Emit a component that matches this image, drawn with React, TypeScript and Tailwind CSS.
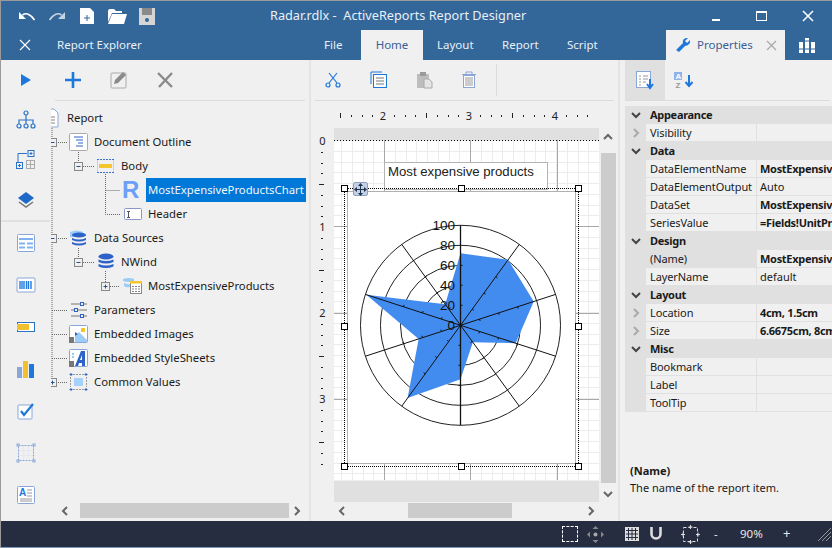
import type { ReactNode } from "react";

const polar = (deg: number, r: number) => {
  const a = (deg * Math.PI) / 180;
  return [460.5 + r * Math.sin(a), 325.3 - r * Math.cos(a)];
};

const values = [72, 81, 77, 58, 21, 54, 90, 44, 99, 26];
const spokes = [0, 36, 72, 108, 144, 180, 216, 252, 288, 324];

function Chevron({ dir, className = "stroke-[#666]" }: { dir: "l" | "r" | "u" | "d"; className?: string }) {
  const pts = { l: "7,1 3,5 7,9", r: "3,1 7,5 3,9", u: "1,7 5,3 9,7", d: "1,3 5,7 9,3" }[dir];
  return (
    <svg width="10" height="10" viewBox="0 0 10 10" className="shrink-0">
      <polyline points={pts} fill="none" strokeWidth="2" className={className} />
    </svg>
  );
}

function Ico({ w = 20, h = 20, children }: { w?: number; h?: number; children: ReactNode }) {
  return (
    <svg width={w} height={h} viewBox={`0 0 ${w} ${h}`} className="shrink-0">
      {children}
    </svg>
  );
}

const blue = "#1e78dc";
const soft = "#8aa6d8";

const treeIcons: Record<string, ReactNode> = {
  report: (
    <Ico w={22} h={20}>
      <path d="M5 1h8l4 4v14H5z" fill="#fff" stroke={soft} />
      <path d="M8 9h6M8 12h6M8 15h6" stroke="#888" />
    </Ico>
  ),
  outline: (
    <Ico w={22} h={20}>
      <rect x="1.5" y="1.5" width="18" height="17" rx="1" fill="#fff" stroke="#aaa" />
      <path d="M6 5h9M8 8h7M10 11h5M8 14h7" stroke="#2d62c8" />
    </Ico>
  ),
  body: (
    <Ico w={22} h={20}>
      <path d="M2 3.5h17M2 16.5h17" stroke="#3c6fd0" strokeDasharray="2 1" />
      <path d="M2.5 4v12M18.5 4v12" stroke="#c5cff0" />
      <rect x="4" y="8" width="13" height="4" fill="#f5c52c" />
    </Ico>
  ),
  chart: (
    <Ico w={22} h={24}>
      <text x="0" y="20" fontFamily="Liberation Sans, sans-serif" fontWeight="700" fontSize="24" fill="#6c9ff5">
        R
      </text>
    </Ico>
  ),
  header: (
    <Ico w={22} h={20}>
      <rect x="2.5" y="4.5" width="17" height="11" rx="1" fill="#fff" stroke="#8a96c8" />
      <path d="M5 7.5h3M6.5 7.5v6M5 13.5h3" stroke="#555" />
    </Ico>
  ),
  sources: (
    <Ico w={22} h={20}>
      <path d="M2 4q7-3 13 0v5H2z" fill="#9ccdf7" />
      <ellipse cx="11" cy="7" rx="7" ry="2.5" fill="#2d62c8" />
      <path d="M4 10q7 3 14 0v2q-7 3-14 0zM4 14q7 3 14 0v2q-7 3-14 0z" fill="#2d62c8" />
    </Ico>
  ),
  db: (
    <Ico w={22} h={20}>
      <ellipse cx="11" cy="4.5" rx="7.5" ry="3" fill="#2d62c8" />
      <path d="M3.5 7.5q7.5 3 15 0v2.5q-7.5 3-15 0zM3.5 12q7.5 3 15 0v2.5q-7.5 3-15 0z" fill="#2d62c8" />
    </Ico>
  ),
  query: (
    <Ico w={22} h={20}>
      <path d="M1 3q6-2 11 0v2q-5 2-11 0zM2 7q5 2 6 1v3q-4 1-6-1z" fill="#9ccdf7" />
      <rect x="8.5" y="5.5" width="11" height="12" fill="#fff" stroke="#888" />
      <rect x="8" y="5" width="12" height="2.5" fill="#f5c52c" />
      <path d="M10 10.5h8M10 13h8M10 15.5h8" stroke="#888" strokeDasharray="2 1" />
    </Ico>
  ),
  params: (
    <Ico w={22} h={20}>
      <path d="M3 4h9M16 4h3M3 10h3M10 10h9M3 16h9M16 16h3" stroke="#777" />
      <rect x="12.5" y="2.5" width="3" height="3" fill="none" stroke="#2d62c8" />
      <rect x="6.5" y="8.5" width="3" height="3" fill="none" stroke="#2d62c8" />
      <rect x="12.5" y="14.5" width="3" height="3" fill="none" stroke="#2d62c8" />
    </Ico>
  ),
  images: (
    <Ico w={22} h={20}>
      <rect x="1.5" y="1.5" width="18" height="17" rx="1" fill="#fff" stroke={soft} />
      <rect x="13" y="4" width="4" height="4" fill="#f5c52c" />
      <path d="M7 12l4-4 8 8v2H7z" fill="#9ccdf7" />
      <path d="M7 8l3 2-3 2z" fill="#2d62c8" />
      <rect x="1" y="13" width="5" height="6" fill="#777" />
    </Ico>
  ),
  styles: (
    <Ico w={22} h={20}>
      <rect x="1.5" y="1.5" width="18" height="17" rx="1" fill="#fff" stroke={soft} />
      <path d="M7 18L13 3h4v15h-3v-3h-3l-1 3zM12 12h2V7z" fill="#2d62c8" />
      <rect x="4" y="5" width="2" height="2" fill="#9ccdf7" />
      <rect x="4" y="8" width="2" height="2" fill="#9ccdf7" />
      <rect x="1" y="13" width="5" height="6" fill="#777" />
    </Ico>
  ),
  common: (
    <Ico w={22} h={20}>
      <rect x="6" y="6" width="9" height="8" fill="#a5d2fb" />
      <path d="M5 2.5h11M5 17.5h11M2.5 5v10M18.5 5v10" stroke="#999" strokeDasharray="2 1" />
      <path d="M3 1v3M1.5 2.5h3M18 1v3M16.5 2.5h3M3 16v3M1.5 17.5h3M18 16v3M16.5 17.5h3" stroke="#2d62c8" />
    </Ico>
  ),
};

const treeRows = [
  { label: "Report", icon: "report", pad: "ml-[-10px]" },
  { label: "Document Outline", icon: "outline", pad: "ml-[17px]" },
  { label: "Body", icon: "body", pad: "ml-[44px]" },
  { label: "MostExpensiveProductsChart", icon: "chart", pad: "ml-[71px]", selected: true },
  { label: "Header", icon: "header", pad: "ml-[71px]" },
  { label: "Data Sources", icon: "sources", pad: "ml-[17px]" },
  { label: "NWind", icon: "db", pad: "ml-[44px]" },
  { label: "MostExpensiveProducts", icon: "query", pad: "ml-[71px]" },
  { label: "Parameters", icon: "params", pad: "ml-[17px]" },
  { label: "Embedded Images", icon: "images", pad: "ml-[17px]" },
  { label: "Embedded StyleSheets", icon: "styles", pad: "ml-[17px]" },
  { label: "Common Values", icon: "common", pad: "ml-[17px]" },
];

const props = [
  { cat: "Appearance" },
  { name: "Visibility", more: true },
  { cat: "Data" },
  { name: "DataElementName", value: "MostExpensiveProductsChart", bold: true },
  { name: "DataElementOutput", value: "Auto" },
  { name: "DataSet", value: "MostExpensiveProducts", bold: true },
  { name: "SeriesValue", value: "=Fields!UnitPrice.Value", bold: true },
  { cat: "Design" },
  { name: "(Name)", value: "MostExpensiveProductsChart", bold: true, active: true },
  { name: "LayerName", value: "default" },
  { cat: "Layout" },
  { name: "Location", value: "4cm, 1.5cm", bold: true, more: true },
  { name: "Size", value: "6.6675cm, 8cm", bold: true, more: true },
  { cat: "Misc" },
  { name: "Bookmark" },
  { name: "Label" },
  { name: "ToolTip" },
];

function TreeLines() {
  const box = (x: number, y: number, minus: boolean) => (
    <g key={`${x}-${y}`}>
      <rect x={x} y={y - 4} width="8" height="8" fill="#f0f0f0" stroke="#888" />
      <path d={minus ? `M${x + 2} ${y}h4` : `M${x + 2} ${y}h4M${x + 4} ${y - 2}v4`} stroke="#2d4f90" />
    </g>
  );
  return (
    <svg className="absolute inset-0" width="260" height="300" viewBox="51 101 260 300">
      <g fill="none" stroke="#666" strokeDasharray="1 1">
        <path d="M52 126V382M56 142.5H67M56 238.5H67M52 310.5H67M52 334.5H67M52 358.5H67M56 382.5H67" />
        <path d="M78.5 152V162M83 166.5H94M78.5 248V258M83 262.5H94" />
        <path d="M105.5 174V214.5H120M105.5 190.5H120M105.5 271V282M110 286.5H120" />
      </g>
      {box(48.5, 142.5, true)}
      {box(74.5, 166.5, true)}
      {box(48.5, 238.5, true)}
      {box(74.5, 262.5, true)}
      {box(101.5, 286.5, false)}
      {box(48.5, 382.5, false)}
    </svg>
  );
}

function TopRuler() {
  const dots = Array.from({ length: 24 }, (_, i) => 340 + i * 10.75);
  return (
    <svg width="309" height="27" viewBox="311 101 309 27" className="shrink-0">
      {dots.map((x, i) =>
        i % 8 === 4 ? (
          <text key={x} x={x} y="120" textAnchor="middle" fontSize="11" fill="#222" fontFamily="Noto Sans, sans-serif">
            {(i + 4) / 8 + 1}
          </text>
        ) : (
          <rect key={x} x={Math.round(x)} y={i % 8 === 0 ? 113 : 115} width="1" height={i % 8 === 0 ? 5 : 2} fill="#222" />
        ),
      )}
    </svg>
  );
}

function SideRuler() {
  const items = Array.from({ length: 32 }, (_, i) => 141 + i * 10.75);
  return (
    <svg width="23" height="340" viewBox="311 128 23 340" className="shrink-0">
      {items.map((y, i) =>
        i % 8 === 0 ? (
          <text key={y} x="322.5" y={y + 4} textAnchor="middle" fontSize="11" fill="#222" fontFamily="Noto Sans, sans-serif">
            {i / 8}
          </text>
        ) : (
          <rect key={y} x={i % 8 === 4 ? 319 : 321} y={Math.round(y)} width={i % 8 === 4 ? 5 : 2} height="1" fill="#222" />
        ),
      )}
    </svg>
  );
}

function GridLines() {
  const xs = Array.from({ length: 26 }, (_, i) => Math.round(341 + i * 10.75) + 0.5);
  const ys = Array.from({ length: 32 }, (_, i) => Math.round(140 + i * 10.75) + 0.5);
  return (
    <svg className="absolute inset-0" width="265" height="340" viewBox="334 140 265 340">
      <g stroke="#ececec" strokeWidth="1">
        {xs.map((x) => (
          <path key={x} d={`M${x} 140V480`} />
        ))}
        {ys.map((y) => (
          <path key={y} d={`M334 ${y}H599`} />
        ))}
      </g>
      <path d="M384.5 140V480M470.5 140V480M557.5 140V480M334 226.5H599M334 313.5H599M334 399.5H599" stroke="#a8a8a8" />
      <path d="M334 140.5H599" stroke="#000" strokeDasharray="1 2" />
    </svg>
  );
}

function Radar() {
  const poly = values.map((v, i) => polar(spokes[i], v).join(",")).join(" ");
  return (
    <svg width="228" height="272" viewBox="347 191 228 272">
      <g fill="none" stroke="#222" strokeWidth="1">
        {[100, 80, 60, 40].map((r) => (
          <circle key={r} cx="460.5" cy="325.3" r={r} />
        ))}
      </g>
      <polygon points={poly} fill="#428bef" />
      {spokes.map((d) => {
        const [x, y] = polar(d, 100);
        const ticks = [20, 40, 60].map((r) => {
          const [a, b] = polar(d, r);
          const [c, e] = polar(d + 90, 2);
          return <path key={r} d={`M${a} ${b}l${c - 460.5} ${e - 325.3}`} stroke="#111" />;
        });
        return (
          <g key={d}>
            <path d={`M460.5 325.3L${x} ${y}`} stroke="#111" strokeWidth={d === 0 || d === 180 ? 1.3 : 1} />
            {ticks}
          </g>
        );
      })}
      {[100, 80, 60, 40, 20, 0].map((v) => (
        <text
          key={v}
          x="455"
          y={325.3 - v + 5}
          textAnchor="end"
          fontSize="13.5"
          fill="#111"
          fontFamily="Liberation Sans, sans-serif"
        >
          {v}
        </text>
      ))}
    </svg>
  );
}

const handleSpots = [
  "left-[7px] top-[45px]",
  "left-[124px] top-[45px]",
  "left-[241px] top-[45px]",
  "left-[7px] top-[183px]",
  "left-[241px] top-[183px]",
  "left-[7px] top-[323px]",
  "left-[124px] top-[323px]",
  "left-[241px] top-[323px]",
];

export default function App() {
  return (
    <div className="w-[832px] h-[548px] overflow-hidden flex flex-col bg-[#f0f0f0] border-l border-t border-[#9a9a9a] font-['Noto_Sans',sans-serif] text-[11.5px] text-[#1a1a1a]">
      {/* title bar */}
      <header className="h-[59px] shrink-0 bg-[#336699] text-[#e8f0f8] flex flex-col">
        <div className="h-[29px] flex items-center relative">
          <div className="ml-[18px] flex items-center">
            <Ico w={16} h={10}>
              <path d="M3.5 4Q9 0 15.5 9" fill="none" stroke="#fff" strokeWidth="1.6" />
              <path d="M0 1v7h7z" fill="#fff" />
            </Ico>
            <div className="ml-[14px]">
              <Ico w={16} h={10}>
                <path d="M12.5 4Q7 0 0.5 9" fill="none" stroke="#c5d2e2" strokeWidth="1.6" />
                <path d="M16 1v7H9z" fill="#c5d2e2" />
              </Ico>
            </div>
            <div className="ml-[14px]">
              <Ico w={16} h={18}>
                <path d="M1 1h10l4 4v12H1z" fill="#fff" />
                <path d="M5 11h6M8 8v6" stroke="#336699" />
              </Ico>
            </div>
            <div className="ml-[12px]">
              <Ico w={20} h={18}>
                <path d="M1 4q0-2 2-2h4l2 2h6v2H5l-4 9z" fill="#fff" />
                <path d="M5 7h15l-3 10H1z" fill="#fff" />
              </Ico>
            </div>
            <div className="ml-[11px]">
              <Ico w={18} h={18}>
                <path d="M1 1h16v17H1z" fill="#d5d5d5" />
                <rect x="4" y="1" width="10" height="7" fill="#8a8a8a" />
                <circle cx="9" cy="13" r="2" fill="#336699" />
              </Ico>
            </div>
          </div>
          <span className="absolute left-[269px] top-[5px] text-[12.7px]">
            Radar.rdlx -&nbsp; ActiveReports Report Designer
          </span>
          <div className="ml-auto flex items-center">
            <div className="h-[2px] w-[8px] bg-white mt-[8px] mr-[36px]" />
            <div className="w-[11px] h-[10px] border border-white border-t-2 mr-[35px]" />
            <div className="mr-[18px]">
              <Ico w={12} h={12}>
                <path d="M1 1L11 11M11 1L1 11" stroke="#fff" strokeWidth="1.5" />
              </Ico>
            </div>
          </div>
        </div>
        <div className="h-[30px] flex items-center">
          <div className="ml-[18px]">
            <Ico w={12} h={12}>
              <path d="M1 1L11 11M11 1L1 11" stroke="#fff" strokeWidth="1.2" />
            </Ico>
          </div>
          <span className="ml-[26px] w-[267px]">Report Explorer</span>
          <span className="w-[37px]">File</span>
          <span className="w-[62px] h-full bg-[#f0f0f0] text-[#3a5f96] flex items-center justify-center">Home</span>
          <span className="w-[79px] pl-[14px]">Layout</span>
          <span className="w-[65px]">Report</span>
          <span className="w-[99px]">Script</span>
          <div className="w-[119px] h-full bg-[#f0f0f0] text-[#3a5f96] flex items-center">
            <div className="ml-[9px] mr-[6px]">
              <Ico w={16} h={16}>
                <path d="M1 13L8 6q-1-4 3-5l2 0-3 3 2 2 3-3q1 5-5 6l-6 6z" fill={blue} />
              </Ico>
            </div>
            <span className="w-[55px]">Properties</span>
            <div className="ml-[14px]">
              <Ico w={11} h={11}>
                <path d="M1 1L10 10M10 1L1 10" stroke="#aaa" strokeWidth="1.3" />
              </Ico>
            </div>
          </div>
          <div className="ml-[13px]">
            <Ico w={18} h={18}>
              <path d="M1 6h4v11H1zM7 2h4v15H7zM13 6h4v11h-4z" fill="#fff" />
              <path d="M1 13h4M7 13h4M13 13h4M7 5h4" stroke="#336699" />
            </Ico>
          </div>
        </div>
      </header>

      <div className="flex-1 flex min-h-0">
        {/* tool rail */}
        <nav className="w-[49px] shrink-0 flex flex-col items-center">
          <div className="h-10 flex items-center justify-center">
            <Ico w={10} h={12}>
              <path d="M0 0L10 6L0 12z" fill={blue} />
            </Ico>
          </div>
          <div className="h-10 flex items-center">
            <Ico>
              <g fill="none" stroke="#2a72c8" strokeWidth="1.2">
                <circle cx="10" cy="3" r="2" />
                <circle cx="3" cy="16" r="2" />
                <circle cx="10" cy="16" r="2" />
                <circle cx="17" cy="16" r="2" />
                <path d="M10 5v9M3 14v-4h14v4" />
              </g>
            </Ico>
          </div>
          <div className="h-10 flex items-center">
            <Ico>
              <path d="M2 12V3.5h9" fill="none" stroke="#2a72c8" />
              <rect x="12" y="0.5" width="6" height="6" fill="none" stroke="#2a72c8" />
              <path d="M13.5 3.5h3M15 2v3" stroke="#2a72c8" />
              <rect x="0.5" y="12.5" width="6" height="6" fill="none" stroke="#2a72c8" />
              <path d="M2 15.5h3M3.5 14v3" stroke="#2a72c8" />
              <rect x="10.5" y="10.5" width="8" height="8" fill="none" stroke="#aaa" />
              <path d="M14.5 10.5v8M10.5 14.5h8" stroke="#aaa" />
            </Ico>
          </div>
          <div className="h-10 flex items-center">
            <Ico>
              <path d="M10 2L18 8L10 14L2 8z" fill="#1d68c8" />
              <path d="M3 12L10 17L17 12" fill="none" stroke="#777" strokeWidth="1.5" />
            </Ico>
          </div>
          <div className="w-full h-[2px] bg-[#e0e0e0]" />
          <div className="h-[42px] flex items-center">
            <Ico>
              <rect x="1.5" y="1.5" width="17" height="17" rx="1" fill="#fff" stroke={soft} />
              <path d="M3 6h14M3 10.5h6M11 10.5h6M3 14.5h6M11 14.5h6" stroke="#7fb2ee" strokeWidth="2" />
            </Ico>
          </div>
          <div className="h-[42px] flex items-center">
            <Ico w={20} h={16}>
              <rect x="1" y="1" width="18" height="14" rx="1" fill="#fff" stroke={soft} />
              <path d="M4 4v8M6 4v8M8 4v8M10.5 4v8M12.5 4v8M15 4v8" stroke={blue} strokeWidth="1.4" />
            </Ico>
          </div>
          <div className="h-[42px] flex items-center">
            <Ico w={18} h={12}>
              <rect x="0.5" y="1.5" width="17" height="9" fill="#fff" stroke="#2a72c8" />
              <rect x="0" y="3" width="12" height="6" fill="#f0c030" />
            </Ico>
          </div>
          <div className="h-[42px] flex items-center">
            <Ico w={18} h={18}>
              <rect x="0" y="7" width="5" height="11" fill="#88a6d6" />
              <rect x="6" y="1" width="5" height="17" fill="#f0c030" />
              <rect x="12" y="4" width="5" height="14" fill={blue} />
            </Ico>
          </div>
          <div className="h-[42px] flex items-center">
            <Ico w={18} h={18}>
              <rect x="1" y="3" width="14" height="14" rx="1" fill="#fff" stroke={soft} />
              <path d="M4 9l3 4 9-11" fill="none" stroke={blue} strokeWidth="2.2" />
            </Ico>
          </div>
          <div className="h-[42px] flex items-center">
            <Ico>
              <rect x="2.5" y="2.5" width="15" height="15" fill="none" stroke={soft} strokeDasharray="2 1" />
              <path d="M7.5 3v14M12.5 3v14M3 7.5h14M3 12.5h14" stroke="#e6e9f2" />
              <rect x="1" y="1" width="2" height="2" fill="#fff" stroke={soft} />
              <rect x="17" y="1" width="2" height="2" fill="#fff" stroke={soft} />
              <rect x="1" y="17" width="2" height="2" fill="#fff" stroke={soft} />
              <rect x="17" y="17" width="2" height="2" fill="#fff" stroke={soft} />
            </Ico>
          </div>
          <div className="h-[42px] flex items-center">
            <Ico>
              <rect x="1.5" y="1.5" width="17" height="17" rx="1" fill="#fff" stroke={soft} />
              <text x="3" y="11" fontSize="10" fontWeight="700" fill={blue} fontFamily="Liberation Sans, sans-serif">
                A
              </text>
              <path d="M11 5h5M11 8h5M11 11h5M4 14h12M4 16h12" stroke="#999" />
            </Ico>
          </div>
        </nav>

        {/* report explorer */}
        <aside className="w-[261px] shrink-0 flex flex-col border-r-2 border-[#e4e4e4] pl-px">
          <div className="h-10 flex items-center shrink-0 pl-[14px] gap-[29px]">
            <Ico w={16} h={16}>
              <path d="M8 0v16M0 8h16" stroke={blue} strokeWidth="2.6" />
            </Ico>
            <Ico w={18} h={18}>
              <rect x="1" y="2" width="15" height="15" rx="1" fill="none" stroke="#aaa" />
              <path d="M4 13l1-4 8-8 3 3-8 8z" fill="#8a8a8a" />
            </Ico>
            <Ico w={17} h={16}>
              <path d="M1 1L15 15M15 1L2 15" stroke="#8a8a8a" strokeWidth="2.4" />
            </Ico>
          </div>
          <div className="h-px bg-[#dcdcdc] ml-[4px] mr-[4px] shrink-0" />
          <div className="relative flex-1 overflow-hidden pt-[5px] text-[11.3px]">
            <TreeLines />
            {treeRows.map((row) => (
              <div key={row.label} className={`relative h-6 flex items-center ${row.pad}`}>
                {treeIcons[row.icon]}
                {row.selected ? (
                  <span className="ml-[2px] flex-1 self-stretch flex items-center px-[2px] mr-[3px] bg-[#0078d7] text-[#f2f7fc]">
                    {row.label}
                  </span>
                ) : (
                  <span className="ml-[4px]">{row.label}</span>
                )}
              </div>
            ))}
          </div>
          <div className="h-[15px] flex items-center shrink-0 mr-[4px] mb-[3px] mt-px">
            <div className="w-[29px] flex justify-center pr-px">
              <Chevron dir="l" />
            </div>
            <div className="w-[209px] h-full bg-[#cccccc]" />
            <div className="flex-1 flex justify-center">
              <Chevron dir="r" />
            </div>
          </div>
        </aside>

        {/* design surface */}
        <main className="w-[309px] shrink-0 flex flex-col border-r-2 border-[#e4e4e4]">
          <div className="h-10 shrink-0 flex items-center pl-[14px]">
            <Ico w={16} h={16}>
              <g fill="none" stroke={blue} strokeWidth="1.2">
                <circle cx="3" cy="13" r="2" />
                <circle cx="13" cy="13" r="2" />
                <path d="M4 11L12 1M12 11L4 1" />
              </g>
            </Ico>
            <div className="ml-[29px]">
              <Ico w={18} h={18}>
                <path d="M1 13V1h11" fill="none" stroke={blue} />
                <rect x="3.5" y="3.5" width="13" height="13" fill="#fff" stroke={blue} />
                <path d="M6 7h8M6 10h8M6 13h8" stroke="#777" />
              </Ico>
            </div>
            <div className="ml-[28px]">
              <Ico w={18} h={18}>
                <path d="M1 3h12v14H1z" fill="#bdbdbd" />
                <rect x="4" y="1" width="6" height="4" fill="#9a9a9a" />
                <path d="M8 8h5l3 3v6H8z" fill="#e5e5e5" stroke="#aaa" />
              </Ico>
            </div>
            <div className="ml-[27px]">
              <Ico w={16} h={18}>
                <path d="M1 3.5h14M5 3V1h6v2" fill="none" stroke={soft} />
                <rect x="2.5" y="4.5" width="11" height="12" fill="#fff" stroke={soft} />
                <rect x="4" y="6" width="8" height="9" fill="#ccc" />
              </Ico>
            </div>
            <div className="ml-[19px] w-px h-8 bg-[#dcdcdc]" />
          </div>
          <div className="h-px bg-[#dcdcdc] ml-[4px] mr-[4px] shrink-0" />
          <TopRuler />
          <div className="flex h-[374px] shrink-0">
            <SideRuler />
            <div className="w-[265px] shrink-0 flex flex-col">
              <div className="h-[12px] bg-[#e0e0e0] shrink-0" />
              <div className="relative h-[340px] shrink-0 bg-white overflow-hidden">
                <GridLines />
                <div className="absolute left-[50px] top-[22px] w-[164px] h-[28px] bg-white border border-[#b4b4b4] pl-[3px] font-['Liberation_Sans',sans-serif] text-[13.2px] leading-[17px] text-[#222]">
                  Most expensive products
                </div>
                <div className="absolute left-[13px] top-[51px] w-[229px] h-[273px] bg-white border border-[#b0b0b0]">
                  <div className="-mt-px -ml-px">
                    <Radar />
                  </div>
                </div>
                <div className="absolute left-[10px] top-[48px] w-[235px] h-[279px] border border-dotted border-black" />
                {handleSpots.map((spot) => (
                  <div key={spot} className={`absolute w-[7px] h-[7px] bg-white border border-black ${spot}`} />
                ))}
                <div className="absolute left-[19px] top-[42px] w-[15px] h-[14px] rounded-[2px] bg-[#c4d0e6] border border-[#8fa0be] flex items-center justify-center">
                  <Ico w={13} h={13}>
                    <path d="M6.5 0l2.5 3h-5zM6.5 13l2.5-3h-5zM0 6.5l3-2.5v5zM13 6.5l-3-2.5v5zM6 3h1v7h-1zM3 6h7v1H3z" fill="#24364f" />
                  </Ico>
                </div>
              </div>
              <div className="flex-1 mt-px bg-[#e0e0e0]" />
            </div>
            <div className="w-[16px] ml-px flex flex-col items-center shrink-0">
              <div className="h-[25px] pt-[4px]">
                <Chevron dir="u" />
              </div>
              <div className="w-[15px] h-[330px] bg-[#cccccc] shrink-0" />
              <div className="flex-1 flex items-center pt-[2px]">
                <Chevron dir="d" />
              </div>
            </div>
          </div>
          <div className="h-[15px] flex items-center shrink-0 ml-[23px] mt-px">
            <div className="w-[74px] pl-[3px]">
              <Chevron dir="l" />
            </div>
            <div className="w-[104px] h-full bg-[#cccccc]" />
            <div className="ml-[74px]">
              <Chevron dir="r" />
            </div>
          </div>
        </main>

        {/* properties */}
        <aside className="flex-1 min-w-0 flex flex-col overflow-hidden pl-[5px] text-[11px]">
          <div className="h-10 shrink-0 flex items-center">
            <div className="w-10 h-full bg-[#e0e0e0] flex items-center justify-center">
              <Ico w={20} h={20}>
                <rect x="1.5" y="1.5" width="14" height="16" fill="#fff" stroke={soft} />
                <path d="M4 6h2M8 6h5M4 9h2M8 9h5M4 12h2M8 12h3M4 15h2" stroke="#999" />
                <path d="M15 9v9M12 14l3 4 3-4" fill="none" stroke={blue} strokeWidth="2" />
              </Ico>
            </div>
            <div className="ml-[9px]">
              <Ico w={20} h={18}>
                <rect x="0" y="1" width="8" height="8" fill="#8fb2ea" />
                <text x="1.5" y="8" fontSize="8" fontWeight="700" fill="#fff" fontFamily="Liberation Sans, sans-serif">
                  A
                </text>
                <text x="1.5" y="17" fontSize="8" fontWeight="700" fill="#999" fontFamily="Liberation Sans, sans-serif">
                  Z
                </text>
                <path d="M15 4v11M11.5 11l3.5 4 3.5-4" fill="none" stroke={blue} strokeWidth="2" />
              </Ico>
            </div>
          </div>
          <div className="h-px bg-[#dcdcdc] mr-[2px] shrink-0" />
          <div className="mt-[5px] leading-[18px] shrink-0">
            {props.map((p) =>
              p.cat ? (
                <div key={p.cat} className="h-[18px] flex items-center bg-[#e0e0e0]">
                  <div className="w-[21px] flex justify-center">
                    <Chevron dir="d" className="stroke-[#444]" />
                  </div>
                  <b className="ml-[4px] font-bold tracking-[-0.3px]">{p.cat}</b>
                </div>
              ) : (
                <div key={p.name} className="h-[18px] flex bg-[#e0e0e0]">
                  <div className="w-[21px] flex items-center justify-center">
                    {p.more && <Chevron dir="r" className="stroke-[#aaa]" />}
                  </div>
                  <div
                    className={`w-[111px] pl-[4px] border-r border-[#e0e0e0] whitespace-nowrap overflow-hidden tracking-[-0.1px] ${
                      p.active ? "bg-[#e0e0e0]" : "bg-[#f0f0f0] border-b"
                    }`}
                  >
                    {p.name}
                  </div>
                  <div
                    className={`flex-1 pl-[3px] whitespace-nowrap overflow-hidden bg-[#f0f0f0] border-b border-[#e0e0e0] ${
                      p.bold ? "font-bold tracking-[-0.3px]" : ""
                    }`}
                  >
                    {p.value}
                  </div>
                </div>
              ),
            )}
          </div>
          <div className="mt-[50px] pl-[5px] leading-[17px]">
            <div className="font-bold">(Name)</div>
            <div>The name of the report item.</div>
          </div>
        </aside>
      </div>

      {/* status bar */}
      <footer className="h-[27px] shrink-0 bg-[#262d40] border-b border-[#7f9ab8] text-[#e6e6e6] flex items-center">
        <div className="ml-[561px] w-[16px] h-[16px] border border-dashed border-white" />
        <div className="ml-[9px]">
          <Ico w={17} h={17}>
            <path d="M8.5 0l3 3h-6zM8.5 17l3-3h-6zM0 8.5l3-3v6zM17 8.5l-3-3v6z" fill="#888" />
            <circle cx="8.5" cy="8.5" r="2" fill="#aaa" />
          </Ico>
        </div>
        <div className="ml-[21px]">
          <Ico w={14} h={14}>
            <path d="M0 0h14v14H0z" fill="#ddd" />
            <path d="M3.5 1v12M7 1v12M10.5 1v12M1 3.5h12M1 7h12M1 10.5h12" stroke="#262d40" />
          </Ico>
        </div>
        <div className="ml-[10px]">
          <Ico w={14} h={14}>
            <path d="M2.5 0v7a4.5 4.5 0 0 0 9 0V0" fill="none" stroke="#ddd" strokeWidth="2.6" />
          </Ico>
        </div>
        <div className="ml-[18px]">
          <Ico w={19} h={19}>
            <rect x="2.5" y="2.5" width="14" height="14" fill="none" stroke="#ddd" strokeDasharray="3 2" />
            <path d="M9.5 0v4M7.5 2h4M9.5 15v4M7.5 17h4M0 9.5h4M2 7.5v4M15 9.5h4M17 7.5v4" stroke="#ddd" />
          </Ico>
        </div>
        <span className="ml-[14px] w-[4px]">-</span>
        <span className="ml-[22px] w-[25px]">90%</span>
        <span className="ml-[18px] text-[13px]">+</span>
        <div className="ml-auto mr-[1px]">
          <Ico w={14} h={14}>
            <path d="M1 14L14 1M5 14L14 5M9 14L14 9" stroke="#999" />
          </Ico>
        </div>
      </footer>
    </div>
  );
}
